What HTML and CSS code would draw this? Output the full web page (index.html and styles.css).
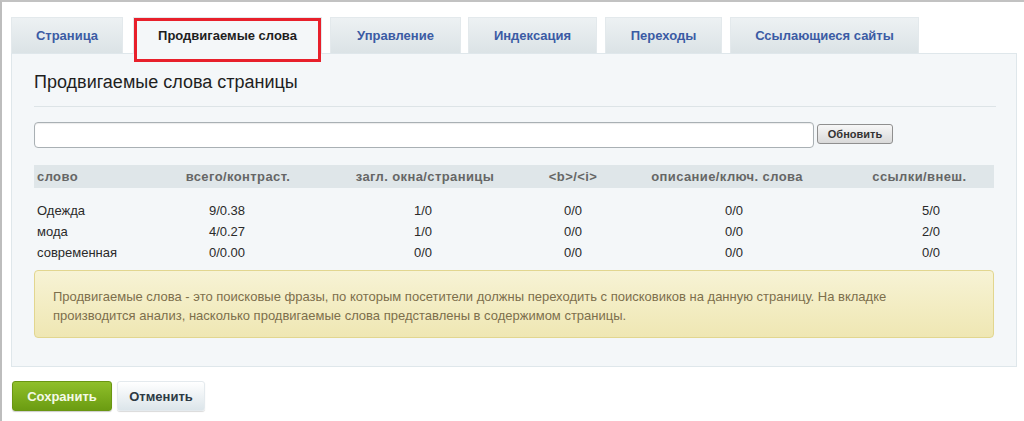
FILE: index.html
```html
<!DOCTYPE html>
<html lang="ru">
<head>
<meta charset="utf-8">
<title>Продвигаемые слова</title>
<link rel="stylesheet" href="styles.css">
</head>
<body>
<div class="frame">
  <div class="tabs">
    <div class="tab tab-1">Страница</div>
    <div class="tab tab-active">Продвигаемые слова</div>
    <div class="tab tab-3">Управление</div>
    <div class="tab tab-4">Индексация</div>
    <div class="tab tab-5">Переходы</div>
    <div class="tab tab-6">Ссылающиеся сайты</div>
  </div>
  <div class="panel">
    <h2 class="title">Продвигаемые слова страницы</h2>
    <div class="sep"></div>
    <div class="search">
      <input class="field" type="text" value="">
      <button class="btn-refresh">Обновить</button>
    </div>
    <div class="thead">
      <div class="c-left">слово</div>
      <div>всего/контраст.</div>
      <div>загл. окна/страницы</div>
      <div>&lt;b&gt;/&lt;i&gt;</div>
      <div>описание/ключ. слова</div>
      <div>ссылки/внеш.</div>
    </div>
    <div class="tbody">
      <div class="trow">
        <div class="c-left">Одежда</div><div>9/0.38</div><div>1/0</div><div>0/0</div><div>0/0</div><div>5/0</div>
      </div>
      <div class="trow">
        <div class="c-left">мода</div><div>4/0.27</div><div>1/0</div><div>0/0</div><div>0/0</div><div>2/0</div>
      </div>
      <div class="trow">
        <div class="c-left">современная</div><div>0/0.00</div><div>0/0</div><div>0/0</div><div>0/0</div><div>0/0</div>
      </div>
    </div>
    <div class="note">Продвигаемые слова - это поисковые фразы, по которым посетители должны переходить с поисковиков на данную страницу. На вкладке производится анализ, насколько продвигаемые слова представлены в содержимом страницы.</div>
  </div>
  <div class="actions">
    <button class="btn btn-save">Сохранить</button>
    <button class="btn btn-cancel">Отменить</button>
  </div>
</div>
</body>
</html>
```

FILE: styles.css
```css
html, body {
  margin: 0;
  padding: 0;
  background: #ffffff;
}
body {
  font-family: "Liberation Sans", Arial, sans-serif;
  color: #222;
}
.frame {
  box-sizing: border-box;
  width: 1024px;
  height: 421px;
  border-top: 2px solid #c2c2c2;
  border-left: 2px solid #bdbdbd;
  padding: 15px 0 0 9px;
  overflow: hidden;
}
.tabs {
  display: flex;
  gap: 8px;
  height: 36px;
  position: relative;
  z-index: 2;
}
.tab {
  box-sizing: border-box;
  height: 36px;
  display: flex;
  align-items: center;
  justify-content: center;
  font-size: 13px;
  font-weight: bold;
  color: #3b5ba4;
  background: linear-gradient(#edf1f3, #dbe3e6);
  border: 1px solid #e3e9ec;
  border-bottom: none;
  padding-bottom: 1px;
}
.tab-1 { width: 112px; margin-right: 2px; }
.tab-active {
  width: 189px;
  background: #f4f7f9;
  color: #1e1e1e;
  position: relative;
  height: 37px;
  margin-bottom: -1px;
}
.tab-active::after {
  content: "";
  position: absolute;
  left: 0;
  right: 0;
  top: 0;
  bottom: -8px;
  border: 3px solid #e8202b;
}
.tab-3 { width: 131px; margin-right: -1px; }
.tab-4 { width: 129px; }
.tab-5 { width: 117px; }
.tab-6 { width: 189px; }

.panel {
  box-sizing: border-box;
  width: 1006px;
  background: #f4f7f9;
  border: 1px solid #dfe7eb;
  padding: 18px 22px 28px 22px;
  position: relative;
  z-index: 1;
}
.title {
  margin: 0;
  font-size: 18px;
  line-height: 20px;
  font-weight: normal;
  color: #1f1f1f;
}
.sep {
  height: 1px;
  background: #dde4e7;
  margin: 14px -2px 15px 0;
}
.search {
  display: flex;
  align-items: center;
  gap: 3px;
}
.field {
  box-sizing: border-box;
  width: 780px;
  height: 26px;
  border: 1px solid #a9b0b4;
  border-radius: 4px;
  background: #fff;
  margin: 0;
  box-shadow: inset 0 1px 1px rgba(0,0,0,0.08);
}
.btn-refresh {
  box-sizing: border-box;
  width: 76px;
  height: 20px;
  margin: -2px 0 0 0;
  padding: 0;
  font-family: "Liberation Sans", Arial, sans-serif;
  font-size: 11px;
  font-weight: bold;
  color: #333;
  background: linear-gradient(#f7f7f7, #d9d9d9);
  border: 1px solid #8f8f8f;
  border-radius: 3px;
}
.thead, .trow {
  display: grid;
  text-align: center;
}
.thead {
  grid-template-columns: 130px 148px 226px 70px 238px 147px;
  margin-top: 17px;
  height: 23px;
  align-items: center;
  background: #dfe6e9;
  font-size: 13px;
  font-weight: bold;
  color: #666;
  letter-spacing: 0.4px;
}
.tbody {
  padding-top: 12px;
}
.trow {
  grid-template-columns: 130px 126px 266px 34px 288px 106px;
  height: 21px;
  align-items: center;
  font-size: 13px;
  color: #2a2a2a;
}
.c-left {
  text-align: left;
  padding-left: 3px;
}
.note {
  box-sizing: border-box;
  margin-top: 7px;
  height: 68px;
  border: 1px solid #e2d68f;
  border-radius: 4px;
  background: linear-gradient(#f7f3d5, #efe7b3);
  padding: 16px 80px 0 18px;
  font-size: 13px;
  line-height: 19px;
  color: #7d6f4c;
}
.actions {
  display: flex;
  gap: 5px;
  margin-top: 14px;
  padding-left: 1px;
}
.btn {
  box-sizing: border-box;
  height: 30px;
  border-radius: 3px;
  font-family: "Liberation Sans", Arial, sans-serif;
  font-size: 13px;
  font-weight: bold;
  padding: 0;
  margin: 0;
}
.btn-save {
  width: 100px;
  color: #f4f9e6;
  background: linear-gradient(#8fbf2a, #6b9c12);
  border: 1px solid #6a9612;
  box-shadow: 0 1px 1px rgba(0,0,0,0.2);
}
.btn-cancel {
  width: 88px;
  color: #2d3a44;
  background: linear-gradient(#ffffff, #dce5ea);
  border: 1px solid #e4eaee;
  box-shadow: 0 1px 1px rgba(0,0,0,0.15);
}
```
